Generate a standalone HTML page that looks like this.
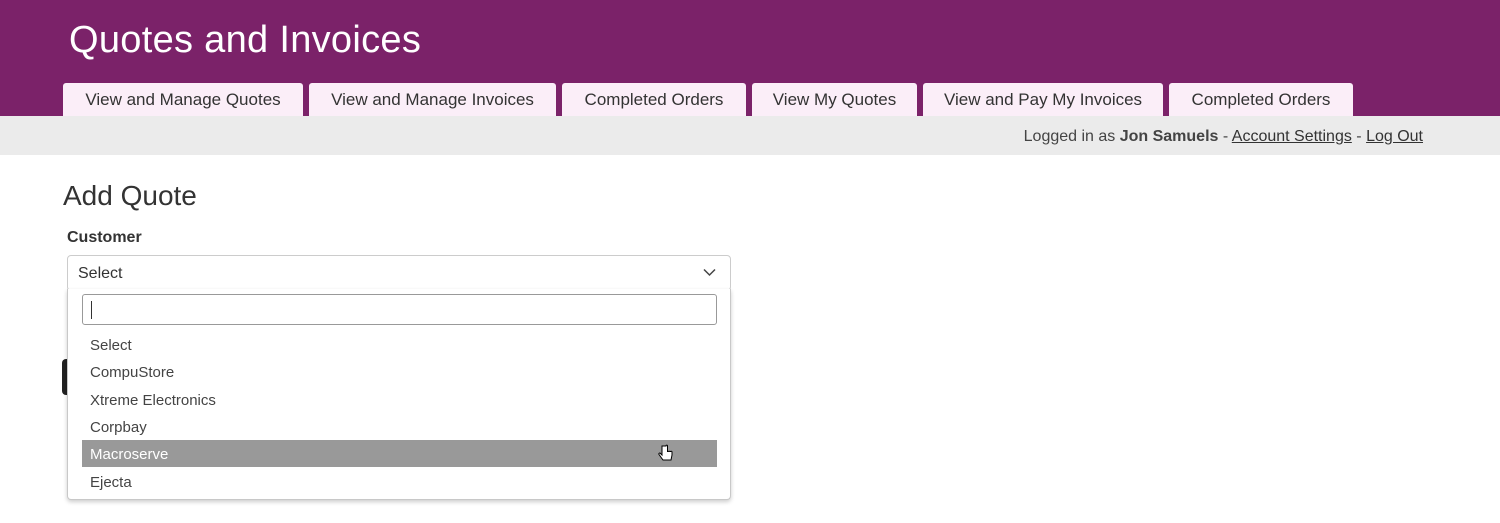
<!DOCTYPE html>
<html><head><style>
*{margin:0;padding:0;box-sizing:border-box}
body{width:1500px;height:523px;background:#fff;font-family:"Liberation Sans",sans-serif;position:relative;overflow:hidden;color:#333}
.hdr{position:absolute;left:0;top:0;width:1500px;height:116px;background:#7b2269}
.title{position:absolute;left:69px;top:19px;font-size:38px;color:#fff;letter-spacing:0.3px}
.tab{position:absolute;top:83px;height:33px;background:#fbeef8;border-radius:3px 3px 0 0;font-size:17px;color:#333;text-align:center;line-height:34px;white-space:nowrap}
.bar{position:absolute;left:0;top:116px;width:1500px;height:39px;background:#ebebeb}
.login{position:absolute;right:77px;top:128px;font-size:16px;color:#444}
.login a{color:#333;text-decoration:underline}
h1{position:absolute;left:63px;top:180px;font-size:28px;font-weight:normal;color:#333}
.lbl{position:absolute;left:67px;top:229px;font-size:16px;font-weight:bold;color:#333}
.sel{position:absolute;left:67px;top:255px;width:664px;height:36px;border:1px solid #ccc;border-radius:4px;font-size:16px;line-height:36px;padding-left:10px;color:#333;background:#fff}
.dd{position:absolute;left:67px;top:289px;width:664px;height:211px;border:1px solid #c8c8c8;border-top:none;background:#fff;border-radius:0 0 4px 4px;box-shadow:0 2px 4px rgba(0,0,0,.2)}
.search{position:absolute;left:14px;top:5px;width:635px;height:31px;border:1px solid #999;border-radius:3px}
.search:after{content:"";position:absolute;left:8px;top:6px;width:1px;height:18px;background:#333}
.opt{position:absolute;left:14px;width:635px;height:27px;font-size:15px;line-height:29px;padding-left:8px;color:#444}
.hl{background:#999;color:#fff}
.btn{position:absolute;left:62px;top:359px;width:6px;height:36px;background:#222;border-radius:4px 0 0 4px}
</style></head><body>
<div class="hdr"></div>
<div class="title">Quotes and Invoices</div>
<div class="tab" style="left:63px;width:240px">View and Manage Quotes</div>
<div class="tab" style="left:309px;width:247px">View and Manage Invoices</div>
<div class="tab" style="left:562px;width:184px">Completed Orders</div>
<div class="tab" style="left:752px;width:165px">View My Quotes</div>
<div class="tab" style="left:923px;width:240px">View and Pay My Invoices</div>
<div class="tab" style="left:1169px;width:184px">Completed Orders</div>
<div class="bar"></div>
<div class="login">Logged in as <b>Jon Samuels</b> - <a>Account Settings</a> - <a>Log Out</a></div>
<h1>Add Quote</h1>
<div class="lbl">Customer</div>
<div class="btn"></div>
<div class="sel">Select
<svg style="position:absolute;right:14px;top:12px" width="13" height="9" viewBox="0 0 13 9"><path d="M1 1.5L6.5 7L12 1.5" fill="none" stroke="#444" stroke-width="1.5"/></svg></div>
<div class="dd">
<div class="search"></div>
<div class="opt" style="top:42px">Select</div>
<div class="opt" style="top:69px">CompuStore</div>
<div class="opt" style="top:97px">Xtreme Electronics</div>
<div class="opt" style="top:124px">Corpbay</div>
<div class="opt hl" style="top:151px">Macroserve
<svg style="position:absolute;left:576px;top:4px" width="16" height="20" viewBox="0 0 16 20"><path d="M4 2v9l-2-2c-1 0-1.5.8-1 1.5l4 5.5h8l1-5v-3c0-1-1.5-1-1.5 0 0-1-1.5-1-1.5 0 0-1-1.5-1-1.5 0V2c0-1.2-1.5-1.2-1.5 0z" fill="#fff" stroke="#000" stroke-width="1"/></svg></div>
<div class="opt" style="top:179px">Ejecta</div>
</div>
</body></html>
